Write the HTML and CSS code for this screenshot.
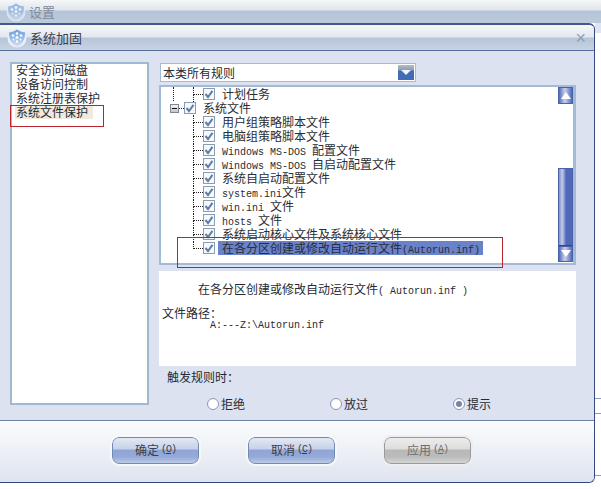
FILE: index.html
```html
<!DOCTYPE html>
<html lang="zh">
<head>
<meta charset="utf-8">
<title>系统加固</title>
<link rel="stylesheet" href="styles.css">
</head>
<body>
<svg class="defs" width="0" height="0" aria-hidden="true">
  <defs>
    <linearGradient id="shield-fill" x1="0" y1="0" x2="0" y2="1">
      <stop offset="0" stop-color="#6f9fd8"/>
      <stop offset="0.55" stop-color="#9fc0e6"/>
      <stop offset="1" stop-color="#dbe7f4"/>
    </linearGradient>
    <symbol id="shield" viewBox="0 0 20 20">
      <circle cx="10" cy="10" r="9.5" fill="#e9f0f8"/>
      <path d="M2 4.5 C5 4 8 3 10 1.5 C12 3 15 4 18 4.5 C18.5 11 15.5 16 10 19 C4.500 16 1.500 11 2 4.500Z" fill="url(#shield-fill)"/>
      <g fill="#fff">
        <circle cx="10" cy="5.500" r="1.300"/><circle cx="6" cy="7.500" r="1.200"/><circle cx="14" cy="7.500" r="1.200"/>
        <circle cx="10" cy="9.500" r="1.500"/><circle cx="6.500" cy="11.500" r="1"/><circle cx="13.500" cy="11.500" r="1"/>
        <circle cx="10" cy="13.500" r="1.200"/>
      </g>
    </symbol>
    <symbol id="check" viewBox="0 0 12 12">
      <rect x="0.500" y="0.500" width="11" height="11" fill="#f6f8fb" stroke="#8b9db5"/>
      <path d="M2.500 6 L5 9 L9.500 2.800" fill="none" stroke="#5d7fa8" stroke-width="2"/>
    </symbol>
  </defs>
</svg>

<div class="stage">
  <header class="back-title">
    <svg class="logo faded"><use href="#shield"/></svg>
    <span>设置</span>
  </header>

  <div class="desk">
    <section class="dialog">
      <div class="title">
        <svg class="logo"><use href="#shield"/></svg>
        <span class="title-text">系统加固</span>
        <span class="close">×</span>
      </div>

      <div class="main">
        <ul class="categories">
          <li>安全访问磁盘</li>
          <li>设备访问控制</li>
          <li>系统注册表保护</li>
          <li><span class="current">系统文件保护</span></li>
        </ul>

        <div class="detail">
          <div class="combo">
            <span class="combo-value">本类所有规则</span>
            <span class="combo-arrow"></span>
          </div>

          <div class="tree">
            <div class="tree-rows">
              <div class="row"><i class="indent guide"></i><i class="branch"></i><svg class="check"><use href="#check"/></svg><span class="label">计划任务</span></div>
              <div class="row parent"><i class="expander"></i><i class="dots"></i><svg class="check"><use href="#check"/></svg><span class="label">系统文件</span></div>
              <div class="row"><i class="indent"></i><i class="branch"></i><svg class="check"><use href="#check"/></svg><span class="label">用户组策略脚本文件</span></div>
              <div class="row"><i class="indent"></i><i class="branch"></i><svg class="check"><use href="#check"/></svg><span class="label">电脑组策略脚本文件</span></div>
              <div class="row"><i class="indent"></i><i class="branch"></i><svg class="check"><use href="#check"/></svg><span class="label"><span class="mono">Windows MS-DOS </span>配置文件</span></div>
              <div class="row"><i class="indent"></i><i class="branch"></i><svg class="check"><use href="#check"/></svg><span class="label"><span class="mono">Windows MS-DOS </span>自启动配置文件</span></div>
              <div class="row"><i class="indent"></i><i class="branch"></i><svg class="check"><use href="#check"/></svg><span class="label">系统自启动配置文件</span></div>
              <div class="row"><i class="indent"></i><i class="branch"></i><svg class="check"><use href="#check"/></svg><span class="label"><span class="mono">system.ini</span>文件</span></div>
              <div class="row"><i class="indent"></i><i class="branch"></i><svg class="check"><use href="#check"/></svg><span class="label"><span class="mono">win.ini </span>文件</span></div>
              <div class="row"><i class="indent"></i><i class="branch"></i><svg class="check"><use href="#check"/></svg><span class="label"><span class="mono">hosts </span>文件</span></div>
              <div class="row"><i class="indent"></i><i class="branch"></i><svg class="check"><use href="#check"/></svg><span class="label">系统启动核心文件及系统核心文件</span></div>
              <div class="row"><i class="indent"></i><i class="branch last"></i><svg class="check"><use href="#check"/></svg><span class="label selected">在各分区创建或修改自动运行文件<span class="mono">(Autorun.inf)</span></span></div>
            </div>
            <div class="scrollbar">
              <span class="scroll-btn up"></span>
              <span class="scroll-thumb"></span>
              <span class="scroll-btn down"></span>
            </div>
          </div>

          <div class="info">
            <p class="info-title">在各分区创建或修改自动运行文件<span class="mono">( Autorun.inf )</span></p>
            <p class="info-head">文件路径：</p>
            <p class="info-path mono">A:---Z:\Autorun.inf</p>
          </div>

          <p class="trigger">触发规则时：</p>
          <div class="radios">
            <label class="radio"><i class="dot"></i>拒绝</label>
            <label class="radio"><i class="dot"></i>放过</label>
            <label class="radio"><i class="dot on"></i>提示</label>
          </div>
        </div>
      </div>

      <footer class="footer">
        <button class="btn">确定<span class="key">(<u>O</u>)</span></button>
        <button class="btn">取消<span class="key">(<u>C</u>)</span></button>
        <button class="btn off">应用<span class="key">(<u>A</u>)</span></button>
      </footer>
    </section>

    <aside class="strip">
      <span class="strip-top"></span>
      <span class="strip-line first"></span>
      <span class="strip-line second"></span>
      <span class="strip-line third"></span>
    </aside>
  </div>

  <span class="mark mark-list"></span>
  <span class="mark mark-row"></span>
</div>
</body>
</html>
```

FILE: styles.css
```css
* { box-sizing: border-box; }
html, body { margin: 0; padding: 0; background: #fff; }
body {
  font-family: "Noto Sans CJK SC", "Liberation Sans", sans-serif;
  font-size: 12px;
  color: #262a33;
  line-height: 14px;
}
p, ul { margin: 0; padding: 0; list-style: none; }
i { font-style: normal; display: block; }
.defs { position: absolute; }
.stage { position: relative; width: 601px; height: 489px; overflow: hidden; }
.mono { font-family: "Liberation Mono", monospace; font-size: 10px; white-space: pre; }

/* window behind */
.back-title {
  height: 23px;
  display: flex;
  align-items: center;
  gap: 3px;
  padding-left: 6px;
  color: #7f8a99;
  font-size: 13px;
  background: linear-gradient(#f5f7f9 0, #e0e5ec 10px, #b5c4d8 11px, #bccadc 23px);
}
.logo { width: 20px; height: 20px; flex: none; }
.faded { opacity: .7; }

.desk { display: flex; height: 460px; }
.dialog {
  width: 595px;
  height: 460px;
  display: flex;
  flex-direction: column;
  border-top: 2px solid #41598f;
  border-right: 1px solid #344a7e;
  border-bottom: 1px solid #344a7e;
  border-radius: 0 6px 6px 0;
  background: #dce2f0;
  overflow: hidden;
}
.title {
  height: 26px;
  display: flex;
  align-items: center;
  gap: 3px;
  padding: 0 8px 0 7px;
  flex: none;
  border-bottom: 1px solid #56709f;
  background: linear-gradient(#f6f8fa 0, #e2e7ee 12px, #b6c5d9 13px, #c8d3e3 25px);
}
.title-text { font-size: 13px; color: #39404d; flex: 1; }
.close { color: #8f9db0; font-size: 18px; line-height: 18px; font-family: "Liberation Sans", sans-serif; }

.main { flex: 1; display: flex; gap: 10px; padding: 11px 0 0 10px; height: 369px; }
.categories {
  width: 139px;
  height: 343px;
  flex: none;
  border: 2px solid #a0b9d3;
  background: #fff;
  padding: 0 0 0 4px;
  margin-top: 0;
}
.categories li { height: 14px; white-space: nowrap; }
.categories li:first-child { margin-top: -1px; }
.current { display: inline-block; height: 14px; background: #efeadc; padding-right: 5px; margin-left: -1px; padding-left: 1px; }

.detail { width: 417px; flex: none; }
.combo {
  width: 256px;
  height: 19px;
  margin: 1px 0 0 1px;
  display: flex;
  align-items: center;
  justify-content: space-between;
  background: #fff;
  border: 1px solid #a7bad3;
  padding: 0 1px 0 2px;
  font-size: 12px;
}
.combo-arrow {
  width: 16px;
  height: 15px;
  position: relative;
  background: linear-gradient(#b7bcc6 0, #8d9bb2 5px, #3f6cb6 6px, #3f6cb6 15px);
}
.combo-arrow::after {
  content: "";
  position: absolute;
  left: 3px;
  top: 5px;
  border: 5px solid transparent;
  border-top: 5px solid #f2f6fb;
  border-bottom: 0;
}

.tree {
  height: 180px;
  margin-top: 3px;
  display: flex;
  justify-content: space-between;
  border: 2px solid #a3bbd7;
  border-right-width: 3px;
  background: #fff;
}
.tree-rows { padding-top: 0; }
.row { display: flex; align-items: center; height: 14px; white-space: nowrap; color: #2a2d33; }
.indent { width: 32px; height: 14px; flex: none; }
.guide { width: 20px; margin-left: 12px; border-left: 1px dotted #222; }
.branch { width: 10px; height: 14px; flex: none; }
.branch::before { content: ""; display: block; height: 7px; border-left: 1px dotted #222; border-bottom: 1px dotted #222; }
.branch::after { content: ""; display: block; height: 7px; border-left: 1px dotted #222; }
.branch.last::after { border-left: 0; }
.check { width: 12px; height: 12px; flex: none; }
.label { margin-left: 3px; padding: 0 4px; height: 14px; }
.selected { background: #6a82c9; padding-right: 3px; }
.parent .check + .label { margin-left: 0; padding-left: 7px; }
.expander {
  width: 9px;
  height: 9px;
  margin-left: 9px;
  flex: none;
  border: 1px solid #7d8794;
  background: linear-gradient(#f4f4f4, #c6c6c6);
  position: relative;
}
.expander::after { content: ""; position: absolute; left: 1px; top: 3px; width: 5px; height: 1px; background: #111; }
.dots { width: 5px; margin-right: 0; border-bottom: 1px dotted #222; flex: none; }

.scrollbar { width: 15px; margin-right: 0; display: flex; flex-direction: column; }
.scroll-btn {
  display: block;
  height: 17px;
  position: relative;
  border: 1px solid #4a62aa;
  background: linear-gradient(90deg, #4f69b8 0, #c9d2ec 45%, #4f69b8 100%);
  flex: none;
}
.scroll-btn::after {
  content: "";
  position: absolute;
  left: 2px;
  top: 4px;
  border: 5px solid transparent;
  border-bottom: 7px solid #fff;
  border-top: 0;
}
.scroll-btn.down { height: 16px; }
.scroll-btn.down::after { border-bottom: 0; border-top: 7px solid #fff; top: 3px; }
.scroll-thumb {
  display: block;
  height: 78px;
  margin-top: 64px;
  border: 1px solid #4a62aa;
  border-bottom-color: #33477f;
  background: linear-gradient(90deg, #7e8fce 0, #c2cbe9 25%, #4f69b8 55%, #4f69b8 100%);
  flex: none;
}

.info { height: 95px; margin-top: 6px; background: #fff; padding-top: 11px; }
.info-title { padding-left: 39px; white-space: nowrap; }
.info-head { margin-top: 7px; padding-left: 3px; }
.info-path { padding-left: 51px; line-height: 10px; margin-top: 1px; }

.trigger { padding: 4px 0 0 8px; margin: 0; }
.radios { display: flex; padding: 13px 0 0 48px; }
.radio { width: 126px; display: flex; align-items: center; gap: 2px; }
.dot {
  width: 12px;
  height: 12px;
  border-radius: 50%;
  border: 1px solid #8d9ab6;
  background: radial-gradient(circle at 60% 60%, #fff 50%, #e7ebf4 100%);
  flex: none;
  position: relative;
}
.dot.on::after {
  content: "";
  position: absolute;
  left: 2px;
  top: 2px;
  width: 6px;
  height: 6px;
  border-radius: 50%;
  background: #7586ae;
}

.footer {
  height: 62px;
  flex: none;
  display: flex;
  gap: 49px;
  padding: 16px 0 0 112px;
  border-top: 1px solid #6d82ab;
  background: linear-gradient(#fbfcfd 0, #eff2f7 25px, #dde3ef 62px);
}
.btn {
  width: 87px;
  height: 27px;
  padding: 0 0 2px;
  border: 1px solid #7189b4;
  border-radius: 7px;
  outline: 2px solid #f6f8fc;
  font: inherit;
  color: #3a3f4c;
  display: flex;
  align-items: center;
  justify-content: center;
  gap: 2px;
  background: linear-gradient(#e3e8f3 0, #c6d2ea 11px, #90a5d6 12px, #96aad8 19px, #c9d5ee 27px);
}
.btn.off {
  color: #6e6e6e;
  border-color: #9a9a9a;
  outline-color: #eeeeee;
  background: linear-gradient(#ececec 0, #dddddd 11px, #b8b8b8 12px, #bcbcbc 19px, #dedede 27px);
}
.key { font-family: "Liberation Mono", monospace; font-size: 10px; letter-spacing: -1px; }

/* right edge of the window behind */
.strip { flex: 1; height: 460px; display: flex; flex-direction: column; background: #fff; }
.strip-top { display: block; height: 10px; background: #dfe5f0; flex: none; }
.strip-line { display: block; height: 1px; background: #8a9bbb; flex: none; }
.strip-line.first { margin-top: 365px; }
.strip-line.second { margin-top: 14px; }
.strip-line.third { margin-top: 61px; }

/* red annotations drawn over the screenshot */
.mark { position: absolute; border: 1px solid #b8232c; }
.mark-list { left: 10px; top: 105px; width: 94px; height: 22px; }
.mark-row { left: 177px; top: 237px; width: 326px; height: 31px; }
```
